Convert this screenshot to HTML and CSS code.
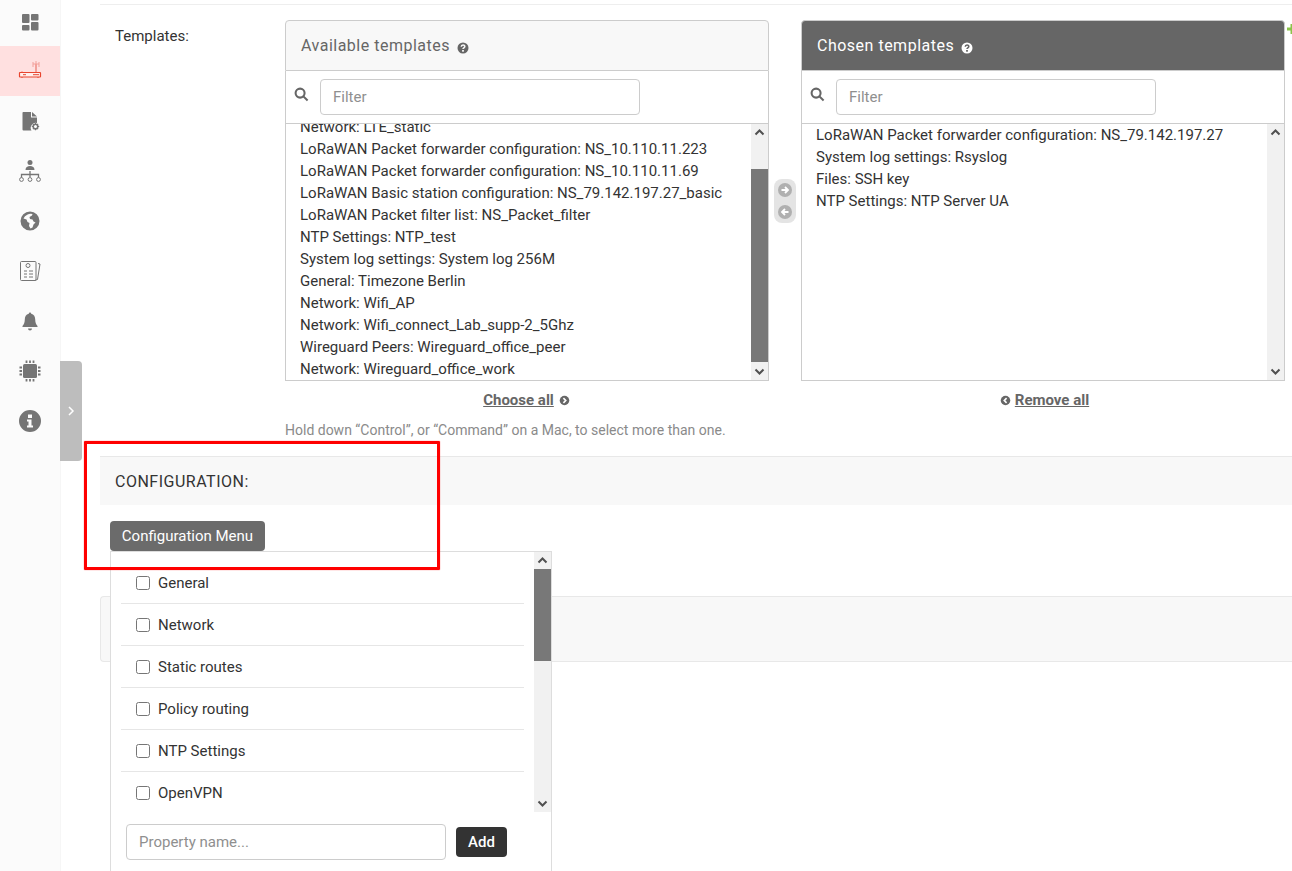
FILE: index.html
```html
<!DOCTYPE html>
<html lang="en">
<head>
<meta charset="utf-8">
<title>Device configuration</title>
<link rel="stylesheet" href="styles.css">
</head>
<body>
<aside class="sidebar">
  <nav class="nav">
    <a class="nav-item"><svg class="ico" viewBox="0 0 20 20"><rect x="2" y="3" width="7.5" height="9" rx="1"/><rect x="11" y="3" width="7.5" height="6.5" rx="1"/><rect x="2" y="14" width="7.5" height="5.500" rx="1"/><rect x="11" y="11" width="7.500" height="8.500" rx="1"/></svg></a>
    <a class="nav-item active"><svg class="ico-wide" viewBox="0 0 24 20"><g class="ant"><path d="M18 3v9" stroke-width="2"/><path d="M15 1v5M18 0v5M21 1v5M15 3h6" stroke-width="1"/></g><rect class="box" x="1.500" y="11.500" width="21" height="4.500" rx=".5"/><path class="box-l" d="M15 13.700h6M5 13.700h3"/><path class="box-l" d="M4 10.500v1M20 16v1M4 16v1"/></svg></a>
    <a class="nav-item"><svg class="ico" viewBox="0 0 20 20"><path d="M3 1h8v5.500h6v5.500a5 5 0 0 0-5.500 7.500H3.500a1 1 0 0 1-1-1V2a1 1 0 0 1 .5-1z"/><path d="M12 1l5 4.500h-5z"/><circle class="gear" cx="15.500" cy="15.500" r="2.300"/><path class="gear-t" d="M15.500 11.800v1.500M15.500 17.700v1.500M11.800 15.500h1.500M17.700 15.500h1.500M12.900 12.900l1 1M17.100 17.100l1 1M12.900 18.100l1-1M17.100 13.900l1-1"/></svg></a>
    <a class="nav-item"><svg class="ico-wide" viewBox="0 0 24 24"><circle cx="12" cy="3.500" r="2.500"/><path d="M7.500 11c0-3 2-4 4.500-4s4.500 1 4.500 4z"/><path class="line" d="M12 12v6M3.500 19v-3.500h17V19"/><circle class="ring" cx="3.500" cy="20.500" r="1.900"/><circle class="ring" cx="12" cy="20.500" r="1.900"/><circle class="ring" cx="20.500" cy="20.500" r="1.900"/></svg></a>
    <a class="nav-item"><svg class="ico" viewBox="0 0 20 20"><path fill-rule="evenodd" d="M10 .5a9.500 9.500 0 1 1 0 19 9.500 9.500 0 0 1 0-19zM3.500 7.500l3 1 1 2.500 2 1-.5 3 1.500 2.500 2-1 1-3 2-2-2-1-1-2-2.500-.5-.5-2 2.500-1.500.5-1.500A8 8 0 0 0 3.500 7.500z"/></svg></a>
    <a class="nav-item"><svg class="ico-wide" viewBox="0 0 24 24"><path class="outline" d="M3.500 2.500h13.500a1 1 0 0 1 1 1v17a1 1 0 0 1-1 1H3.500a1 1 0 0 1-1-1v-17a1 1 0 0 1 1-1z"/><path class="outline" d="M20 4.500l2 .5-2.500 15.500-3 1"/><circle class="outline" cx="10" cy="6.500" r="2"/><path class="outline" d="M6 12h3M11 12h4M6 15h3M11 15h4M6 18h3M11 18h4"/></svg></a>
    <a class="nav-item"><svg class="ico" viewBox="0 0 20 20"><path d="M10 1.500c.8 0 1.200.6 1.200 1.300 2.800.6 4 3 4 5.700 0 3 .9 5 2.300 6.500v1H2.500v-1C3.900 13.500 4.800 11.500 4.800 8.500c0-2.700 1.200-5.100 4-5.700 0-.7.4-1.300 1.200-1.300z"/><path d="M8 17.500h4a2 2 0 0 1-4 0z"/></svg></a>
    <a class="nav-item"><svg class="ico-wide" viewBox="0 0 24 24"><rect x="5" y="5" width="14" height="14" rx="1.500"/><path class="line thick" d="M8.500 1.500v2.500M12 1.500v2.500M15.500 1.500v2.500M8.500 20v2.500M12 20v2.500M15.500 20v2.500M1.500 8.500h2.500M1.500 12h2.500M1.500 15.500h2.500M20 8.500h2.500M20 12h2.500M20 15.500h2.500"/></svg></a>
    <a class="nav-item"><svg class="ico-wide" viewBox="0 0 24 24"><path fill-rule="evenodd" d="M12 1a11 11 0 1 1 0 22 11 11 0 0 1 0-22zM10 5.500v3.500h4V5.500zM9 10.500v2h1.500v4H9v2h6v-2h-1.500v-6z"/></svg></a>
  </nav>
</aside>
<button class="collapse" type="button" aria-label="Expand"><svg viewBox="0 0 8 12"><path d="M2 2l4 4-4 4"/></svg></button>

<main class="main">
  <section class="row">
    <label class="row-label">Templates:</label>
    <div class="selector">
      <div class="box-panel">
        <h2 class="box-title">Available templates <svg class="help" viewBox="0 0 12 12"><circle cx="6" cy="6" r="5.500"/><path class="help-q" d="M4.300 4.700c0-2.200 3.500-2.200 3.500-.1 0 1.300-1.800 1.300-1.800 2.500"/><rect class="help-d" x="5.100" y="8" width="1.800" height="1.700"/></svg></h2>
        <div class="filter">
          <svg class="search" viewBox="0 0 16 16"><circle cx="6.500" cy="6.500" r="4.800"/><path d="M10 10l4.500 4.500"/></svg>
          <input class="filter-input" type="text" placeholder="Filter">
        </div>
        <div class="list-wrap">
          <ul class="list scrolled">
            <li>Network: LTE_static</li>
            <li>LoRaWAN Packet forwarder configuration: NS_10.110.11.223</li>
            <li>LoRaWAN Packet forwarder configuration: NS_10.110.11.69</li>
            <li>LoRaWAN Basic station configuration: NS_79.142.197.27_basic</li>
            <li>LoRaWAN Packet filter list: NS_Packet_filter</li>
            <li>NTP Settings: NTP_test</li>
            <li>System log settings: System log 256M</li>
            <li>General: Timezone Berlin</li>
            <li>Network: Wifi_AP</li>
            <li>Network: Wifi_connect_Lab_supp-2_5Ghz</li>
            <li>Wireguard Peers: Wireguard_office_peer</li>
            <li>Network: Wireguard_office_work</li>
          </ul>
          <div class="sbar">
            <svg class="sbar-btn" viewBox="0 0 17 17"><path d="M4.500 10.500l4-4 4 4"/></svg>
            <div class="sbar-track"><div class="sbar-thumb t-available"></div></div>
            <svg class="sbar-btn" viewBox="0 0 17 17"><path d="M4.500 6.500l4 4 4-4"/></svg>
          </div>
        </div>
        <a class="all-link choose"><span class="u">Choose all</span> <svg class="circ" viewBox="0 0 12 12"><circle cx="6" cy="6" r="5.200"/><path d="M4.800 3.500l2.500 2.500-2.500 2.500"/></svg></a>
      </div>

      <div class="mover">
        <svg class="mv" viewBox="0 0 14 14"><circle cx="7" cy="7" r="7"/><path d="M3.500 7h6.500M7 4l3 3-3 3"/></svg>
        <svg class="mv" viewBox="0 0 14 14"><circle cx="7" cy="7" r="7"/><path d="M10.500 7H4M7 4L4 7l3 3"/></svg>
      </div>

      <div class="box-panel">
        <h2 class="box-title chosen">Chosen templates <svg class="help light" viewBox="0 0 12 12"><circle cx="6" cy="6" r="5.500"/><path class="help-q" d="M4.300 4.700c0-2.200 3.500-2.200 3.500-.1 0 1.300-1.800 1.300-1.800 2.500"/><rect class="help-d" x="5.100" y="8" width="1.800" height="1.700"/></svg></h2>
        <div class="filter">
          <svg class="search" viewBox="0 0 16 16"><circle cx="6.500" cy="6.500" r="4.800"/><path d="M10 10l4.500 4.500"/></svg>
          <input class="filter-input" type="text" placeholder="Filter">
        </div>
        <div class="list-wrap">
          <ul class="list chosen-list">
            <li>LoRaWAN Packet forwarder configuration: NS_79.142.197.27</li>
            <li>System log settings: Rsyslog</li>
            <li>Files: SSH key</li>
            <li>NTP Settings: NTP Server UA</li>
          </ul>
          <div class="sbar">
            <svg class="sbar-btn" viewBox="0 0 17 17"><path d="M4.500 10.500l4-4 4 4"/></svg>
            <div class="sbar-track"></div>
            <svg class="sbar-btn" viewBox="0 0 17 17"><path d="M4.500 6.500l4 4 4-4"/></svg>
          </div>
        </div>
        <a class="all-link remove"><svg class="circ" viewBox="0 0 12 12"><circle cx="6" cy="6" r="5.200"/><path d="M7.200 3.500L4.700 6l2.500 2.500"/></svg> <span class="u">Remove all</span></a>
      </div>

      <svg class="plus" viewBox="0 0 12 12"><path d="M6 1v10M1 6h10"/></svg>
    </div>
  </section>
  <p class="help-text">Hold down “Control”, or “Command” on a Mac, to select more than one.</p>

  <h2 class="section-head">CONFIGURATION:</h2>
  <div class="config">
    <button class="menu-btn" type="button">Configuration Menu</button>
    <div class="grey-box"></div>
    <div class="menu">
      <div class="menu-scroll">
        <ul class="menu-list">
          <li><label><input type="checkbox">General</label></li>
          <li><label><input type="checkbox">Network</label></li>
          <li><label><input type="checkbox">Static routes</label></li>
          <li><label><input type="checkbox">Policy routing</label></li>
          <li><label><input type="checkbox">NTP Settings</label></li>
          <li><label><input type="checkbox">OpenVPN</label></li>
        </ul>
        <div class="sbar">
          <svg class="sbar-btn" viewBox="0 0 17 17"><path d="M4.500 10.500l4-4 4 4"/></svg>
          <div class="sbar-track"><div class="sbar-thumb t-menu"></div></div>
          <svg class="sbar-btn" viewBox="0 0 17 17"><path d="M4.500 6.500l4 4 4-4"/></svg>
        </div>
      </div>
      <div class="add-row">
        <input class="prop-input" type="text" placeholder="Property name...">
        <button class="add-btn" type="button">Add</button>
      </div>
    </div>
  </div>
</main>
<div class="annotation"></div>
</body>
</html>
```
FILE: styles.css
```css
* { box-sizing: border-box; }
html, body { height: 100%; }
body {
  margin: 0;
  display: flex;
  height: 871px;
  overflow: hidden;
  background: #fff;
  color: #333;
  font-family: Roboto, "Liberation Sans", sans-serif;
  font-size: 15px;
  position: relative;
}

/* sidebar */
.sidebar { flex: 0 0 61px; background: #fbfbfb; border-right: 1px solid #f6f6f6; }
.nav { display: flex; flex-direction: column; margin-top: -4px; }
.nav-item { height: 50px; display: flex; align-items: center; justify-content: center; }
.nav-item.active { background: #ffe0e0; }
.ico { width: 20px; height: 20px; fill: #757575; }
.ico-wide { width: 24px; height: 24px; fill: #757575; }
.nav-item .line { fill: none; stroke: #757575; stroke-width: 1.300; }
.nav-item .line.thick { stroke-width: 1.800; }
.nav-item .ring { fill: #fff; stroke: #757575; stroke-width: 1; }
.nav-item .gear { fill: #fff; stroke: #757575; stroke-width: 1.600; }
.nav-item .gear-t { fill: none; stroke: #757575; stroke-width: 1.200; }
.nav-item .outline { fill: none; stroke: #757575; stroke-width: 1; }
.ant { fill: none; stroke: #f2a09a; }
.box { fill: #fff0ee; stroke: #e8452f; stroke-width: 1.200; }
.box-l { fill: none; stroke: #e8452f; stroke-width: 1; }

.collapse {
  position: absolute;
  left: 60px;
  top: 361px;
  width: 22px;
  height: 100px;
  padding: 0;
  border: 0;
  border-radius: 0 4px 4px 0;
  background: #bdbdbd;
  display: flex;
  align-items: center;
  justify-content: center;
}
.collapse svg { width: 8px; height: 12px; fill: none; stroke: #fff; stroke-width: 1.500; }

/* main */
.main { flex: 0 0 1192px; margin-left: 39px; padding-top: 4px; }
.row { display: flex; border-top: 1px solid #eee; padding-top: 15px; }
.row-label { flex: 0 0 185px; padding-left: 15px; padding-top: 5px; font-size: 15px; line-height: 20px; margin-top: 1px; }
.selector { display: flex; align-items: flex-start; }

.box-panel { width: 484px; flex: none; }
.box-title {
  margin: 0;
  height: 51px;
  padding: 0 15px;
  display: flex;
  align-items: center;
  gap: 7px;
  font-size: 16px;
  font-weight: 400;
  letter-spacing: .5px;
  color: #666;
  background: #f8f8f8;
  border: 1px solid #ccc;
  border-radius: 4px 4px 0 0;
}
.box-title.chosen { background: #666; color: #fff; }
.help { width: 12px; height: 12px; margin-top: 4px; fill: #666; }
.help-q { fill: none; stroke: #f8f8f8; stroke-width: 1.600; }
.help-d { fill: #f8f8f8; }
.help.light { fill: #fff; }
.help.light .help-q { stroke: #666; }
.help.light .help-d { fill: #666; }

.filter {
  height: 53px;
  display: flex;
  align-items: center;
  gap: 11px;
  padding: 0 8px;
  border: 1px solid #ccc;
  border-width: 0 1px 1px;
}
.search { width: 15px; height: 15px; margin-top: -5px; fill: none; stroke: #666; stroke-width: 2.200; flex: none; }
.filter-input {
  width: 320px;
  height: 36px;
  padding: 0 12px;
  border: 1px solid #ccc;
  border-radius: 4px;
  font: inherit;
  color: #333;
}
.filter-input::placeholder, .prop-input::placeholder { color: #8f8f8f; opacity: 1; }

.list-wrap {
  height: 257px;
  display: flex;
  border: 1px solid #ccc;
  border-width: 0 1px 1px;
  overflow: hidden;
}
.list {
  flex: 1;
  margin: 0;
  padding: 0 14px;
  list-style: none;
  line-height: 22px;
  white-space: nowrap;
  overflow: hidden;
}
.list.scrolled li:first-child { margin-top: -8px; }
.sbar { flex: 0 0 17px; display: flex; flex-direction: column; background: #f1f1f1; }
.sbar-btn { flex: 0 0 17px; width: 17px; height: 17px; fill: none; stroke: #505050; stroke-width: 2; }
.sbar-track { flex: 1; }
.sbar-thumb { background: #787878; }
.t-available { margin-top: 28px; height: 193px; }
.t-menu { height: 92px; }

.all-link {
  display: flex;
  justify-content: center;
  align-items: center;
  gap: 5px;
  height: 38px;
  font-weight: 700;
  color: #666;
}
.all-link.choose { padding-right: 1px; }
.all-link.remove { gap: 4px; padding-left: 3px; }
.u { text-decoration: underline; }
.circ { width: 11px; height: 11px; margin-top: 1px; fill: #666; stroke: none; }
.circ path { fill: none; stroke: #fff; stroke-width: 1.800; }

.mover {
  flex: 0 0 22px;
  width: 22px;
  margin: 159px 5px 0;
  height: 44px;
  padding-top: 4px;
  display: flex;
  flex-direction: column;
  align-items: center;
  gap: 8px;
  background: #e4e4e4;
  border-radius: 8px;
}
.mv { width: 14px; height: 14px; flex: none; fill: #b0b0b0; }
.mv path { fill: none; stroke: #fff; stroke-width: 1.800; }
.plus { width: 12px; height: 12px; flex: none; margin: 3px 0 0 1px; fill: none; stroke: #8bc34a; stroke-width: 3; }

.help-text { margin: 1px 0 0 185px; font-size: 14px; line-height: 20px; color: #8a8a8a; height: 36px; }

.section-head {
  margin: 0;
  height: 49px;
  padding: 0 15px;
  display: flex;
  align-items: center;
  font-size: 16px;
  font-weight: 400;
  letter-spacing: .5px;
  color: #333;
  background: #f8f8f8;
  border-top: 1px solid #e8e8e8;
}

.config { position: relative; padding: 16px 0 0 10px; }
.menu-btn {
  display: block;
  height: 30px;
  width: 155px;
  padding: 0;
  border: 0;
  border-radius: 4px;
  background: #6b6b6b;
  color: #fff;
  font: inherit;
}
.grey-box {
  margin: 45px 0 0 -10px;
  height: 66px;
  background: #f8f8f8;
  border: 1px solid #e8e8e8;
  border-right: 0;
  border-radius: 4px 0 0 4px;
}
.menu {
  position: absolute;
  left: 10px;
  top: 46px;
  width: 442px;
  height: 330px;
  background: #fff;
  border: 1px solid #ddd;
}
.menu-scroll { height: 260px; display: flex; }
.menu-list { flex: 1; margin: 0; padding: 10px 10px 0; list-style: none; overflow: hidden; }
.menu-list li { height: 42px; padding-left: 15px; border-bottom: 1px solid #e6e6e6; display: flex; align-items: center; }
.menu-list li:last-child { border-bottom: 0; }
.menu-list label { display: flex; align-items: center; gap: 8px; }
.menu-list input { margin: 0; width: 14px; height: 14px; }
.add-row { display: flex; align-items: center; gap: 10px; padding: 12px 15px 0; }
.prop-input {
  width: 320px;
  height: 36px;
  padding: 0 12px;
  border: 1px solid #ccc;
  border-radius: 4px;
  font: inherit;
}
.add-btn {
  width: 51px;
  height: 30px;
  padding: 0;
  border: 0;
  border-radius: 4px;
  background: #333;
  color: #fff;
  font: inherit;
  font-weight: 500;
}

/* red highlight drawn over the screenshot */
.annotation {
  position: absolute;
  left: 84px;
  top: 441px;
  width: 356px;
  height: 129px;
  border: 3px solid #f00;
  border-radius: 1px;
  box-shadow: 0 0 1px #f00;
  pointer-events: none;
}
```
